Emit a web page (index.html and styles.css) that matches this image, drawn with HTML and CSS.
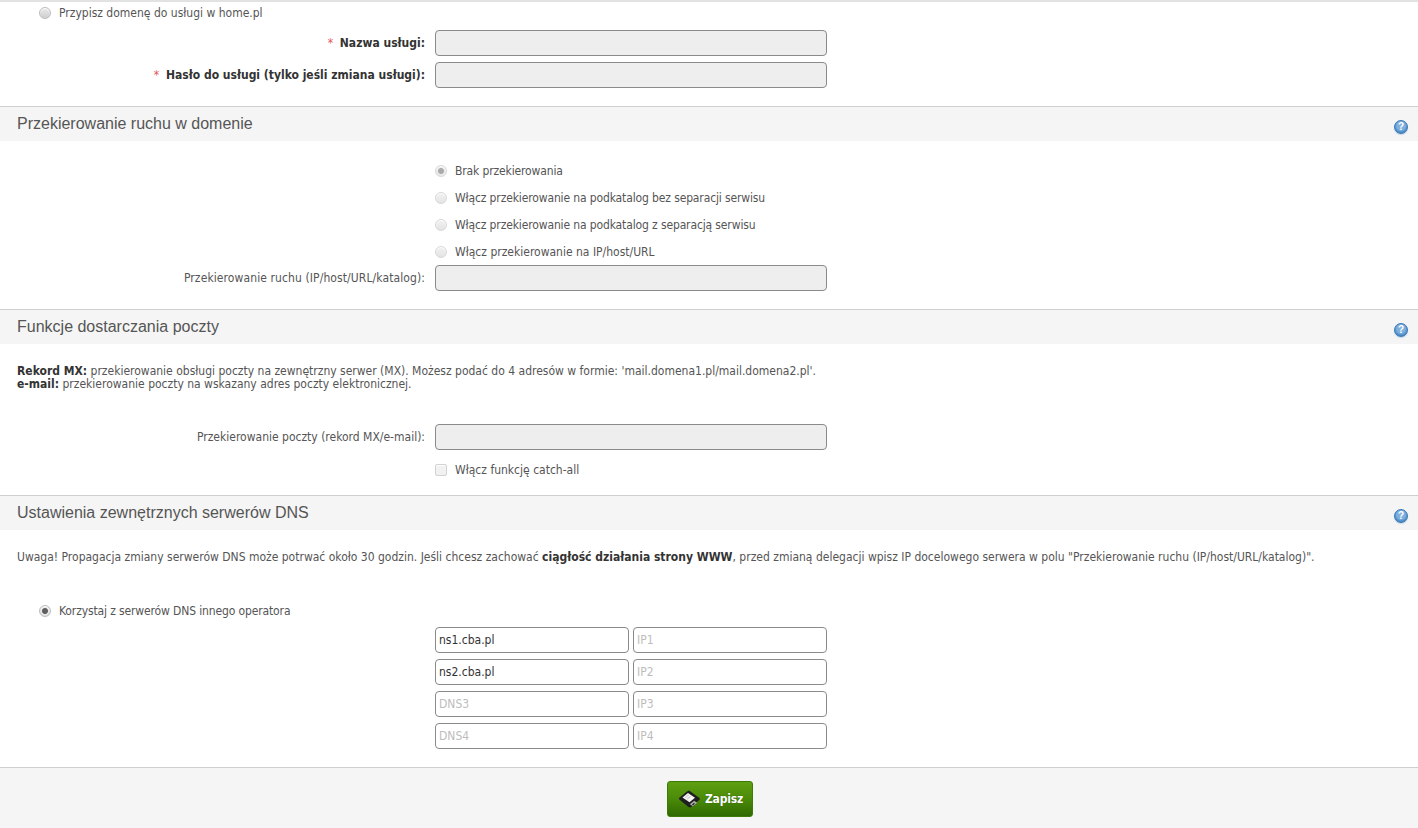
FILE: index.html
```
<!DOCTYPE html>
<html lang="pl">
<head>
<meta charset="utf-8">
<title>Ustawienia domeny</title>
<link rel="stylesheet" href="styles.css">
</head>
<body>
<form class="page">
  <div class="block block-service">
    <label class="choice choice-left"><input type="radio" class="radio" name="svc"><span>Przypisz domenę do usługi w home.pl</span></label>
    <div class="rows">
      <div class="row"><label class="lbl strong"><span class="req">*</span> Nazwa usługi:</label><input class="field off" disabled></div>
      <div class="row"><label class="lbl strong"><span class="req">*</span> Hasło do usługi (tylko jeśli zmiana usługi):</label><input class="field off" disabled></div>
    </div>
  </div>

  <div class="head"><h2>Przekierowanie ruchu w domenie</h2><span class="help">?</span></div>
  <div class="block block-redirect">
    <div class="options">
      <label class="choice tight"><input type="radio" class="radio dis" name="r" checked disabled><span>Brak przekierowania</span></label>
      <label class="choice tight"><input type="radio" class="radio dis" name="r" disabled><span>Włącz przekierowanie na podkatalog bez separacji serwisu</span></label>
      <label class="choice tight"><input type="radio" class="radio dis" name="r" disabled><span>Włącz przekierowanie na podkatalog z separacją serwisu</span></label>
      <label class="choice"><input type="radio" class="radio dis" name="r" disabled><span>Włącz przekierowanie na IP/host/URL</span></label>
    </div>
    <div class="row"><label class="lbl wide">Przekierowanie ruchu (IP/host/URL/katalog):</label><input class="field off" disabled></div>
  </div>

  <div class="head"><h2>Funkcje dostarczania poczty</h2><span class="help">?</span></div>
  <div class="block block-mail">
    <p class="note"><b>Rekord MX:</b> przekierowanie obsługi poczty na zewnętrzny serwer (MX). Możesz podać do 4 adresów w formie: 'mail.domena1.pl/mail.domena2.pl'.<br><b>e-mail:</b> przekierowanie poczty na wskazany adres poczty elektronicznej.</p>
    <div class="row"><label class="lbl">Przekierowanie poczty (rekord MX/e-mail):</label><input class="field off" disabled></div>
    <label class="choice choice-catch"><input type="checkbox" class="check" disabled><span>Włącz funkcję catch-all</span></label>
  </div>

  <div class="head"><h2>Ustawienia zewnętrznych serwerów DNS</h2><span class="help">?</span></div>
  <div class="block block-dns">
    <p class="note">Uwaga! Propagacja zmiany serwerów DNS może potrwać około 30 godzin. Jeśli chcesz zachować <b>ciągłość działania strony WWW</b>, przed zmianą delegacji wpisz IP docelowego serwera w polu "Przekierowanie ruchu (IP/host/URL/katalog)".</p>
    <label class="choice choice-left choice-dns tight"><input type="radio" class="radio" name="dns" checked><span>Korzystaj z serwerów DNS innego operatora</span></label>
    <div class="dns-grid">
      <input class="field" value="ns1.cba.pl"><input class="field" placeholder="IP1">
      <input class="field" value="ns2.cba.pl"><input class="field" placeholder="IP2">
      <input class="field" placeholder="DNS3"><input class="field" placeholder="IP3">
      <input class="field" placeholder="DNS4"><input class="field" placeholder="IP4">
    </div>
  </div>

  <div class="foot">
    <button type="button" class="save">
      <svg class="disk" width="21" height="18" viewBox="0 0 21 18" aria-hidden="true">
        <path d="M0 8 8 1.500 10 .500 20.500 8l.3 1.500L11.500 17.500 9.500 17 .3 9.500z" fill="#1f1f1f"/>
        <path d="M3.500 7.500 9 3l7 4.700-5.500 4.600z" fill="#f6f6f6"/>
        <path d="M5.800 7.600 9.200 4.800l.8.500-3.400 2.800zM7.700 8.900l3.400-2.800.8.500-3.400 2.800z" fill="#c4c4c4"/>
        <path d="M10.800 14.200l4.300-3.500 3 2-4.300 3.500z" fill="#a8a8a8"/>
        <path d="M13 14.600l1.800-1.500 1 .7-1.800 1.500z" fill="#161616"/>
      </svg>
      <span>Zapisz</span>
    </button>
  </div>
</form>
</body>
</html>
```

FILE: styles.css
```
* { box-sizing: border-box; }
html, body { margin: 0; padding: 0; }
body {
  background: #fff;
  color: #555;
  font-family: "DejaVu Sans Condensed", "DejaVu Sans", sans-serif;
  font-stretch: condensed;
  font-size: 12px;
  line-height: 14px;
}
.page { display: flex; flex-direction: column; height: 828px; overflow: hidden; border-top: 2px solid #e2e2e2; }

.block-service { height: 104px; padding-top: 4px; }
.block-redirect { height: 168px; padding-top: 16px; }
.block-mail { height: 151px; padding-top: 21px; }
.block-dns { height: 237px; padding-top: 21px; }

.head {
  display: flex;
  align-items: center;
  justify-content: space-between;
  height: 35px;
  padding: 0 10px 0 17px;
  background: #f5f5f5;
  border-top: 1px solid #cfcfcf;
}
.head h2 {
  margin: 0 0 1px;
  font: 400 16px/20px "Liberation Sans", Arial, sans-serif;
  color: #555;
}
.help {
  display: flex;
  align-items: center;
  justify-content: center;
  width: 14px;
  height: 14px;
  margin: 5px 0 0;
  border-radius: 50%;
  background: radial-gradient(circle at 50% 40%, #7fb0dd 0 45%, #4b8bc8 70%, #2c6aa8 100%);
  border: 1px solid #3a78b6;
  box-shadow: 0 1px 1px #c4d4e4;
  color: #fff;
  font: 700 10px/12px "Liberation Sans", Arial, sans-serif;
}

.rows { display: flex; flex-direction: column; gap: 6px; margin-top: 10px; }
.row { display: flex; align-items: center; gap: 10px; }
.lbl { width: 425px; text-align: right; }
.wide { letter-spacing: 0.1px; }
.tight { letter-spacing: -0.13px; }
.strong { font-weight: 700; color: #333; }
.req { color: #e8555a; font-weight: 400; margin-right: 3px; }

.field {
  display: block;
  width: 392px;
  height: 26px;
  padding: 0 3px;
  border: 1px solid #8a8a8a;
  border-radius: 4px;
  background: #fff;
  color: #333;
  font: 12px "DejaVu Sans Condensed", "DejaVu Sans", sans-serif;
  font-stretch: condensed;
  outline: none;
}
.field::placeholder { color: #bdbdbd; opacity: 1; }
.off { background: #eee; }

.choice { display: flex; align-items: center; gap: 8px; height: 27px; }
.options { display: flex; flex-direction: column; padding-left: 435px; }
.choice-left { padding-left: 39px; height: 14px; }
.choice-catch { padding-left: 435px; margin-top: 6px; }
.choice-dns { margin-top: 40px; margin-bottom: 9px; }

.radio, .check {
  appearance: none;
  flex: none;
  margin: 0;
  width: 12px;
  height: 12px;
  background: linear-gradient(#e9e9e9, #cfcfcf);
  border: 1px solid #bdbdbd;
  box-shadow: inset 0 1px 1px #fff;
}
.radio { border-radius: 50%; }
.check { border-radius: 2px; background: #f1f1f1; border-color: #d2d2d2; }
.radio:checked { background: radial-gradient(circle, #5f5f5f 0 2.500px, #e8e8e8 3.500px, #d4d4d4 100%); }
.dis { background: linear-gradient(#f1f1f1, #e4e4e4); border-color: #d8d8d8; }
.dis:checked { background: radial-gradient(circle, #aaa 0 2.500px, #ececec 3.500px, #e2e2e2 100%); }

.note { margin: 0; padding: 0 17px; line-height: 13px; color: #555; }
.note b { color: #333; }
.block-mail .note { margin-bottom: 33px; }

.dns-grid {
  display: grid;
  grid-template-columns: 194px 194px;
  gap: 6px 4px;
  padding-left: 435px;
}
.dns-grid .field { width: 194px; }

.foot { flex: 1; display: flex; justify-content: center; padding: 13px 0 0 2px; background: #f5f5f5; border-top: 1px solid #cfcfcf; }
.save {
  display: flex;
  align-items: center;
  justify-content: center;
  gap: 5px;
  width: 86px;
  height: 36px;
  padding: 0 0 0 2px;
  border: 1px solid #3d7a06;
  border-radius: 3px;
  background: linear-gradient(#5f9f12, #4a8a08 50%, #2f6a02);
  color: #fff;
  font: 700 12px "DejaVu Sans Condensed", "DejaVu Sans", sans-serif;
  font-stretch: condensed;
  letter-spacing: -0.2px;
  text-shadow: 0 0 1px #1f4a00;
}
.disk { flex: none; }
```
